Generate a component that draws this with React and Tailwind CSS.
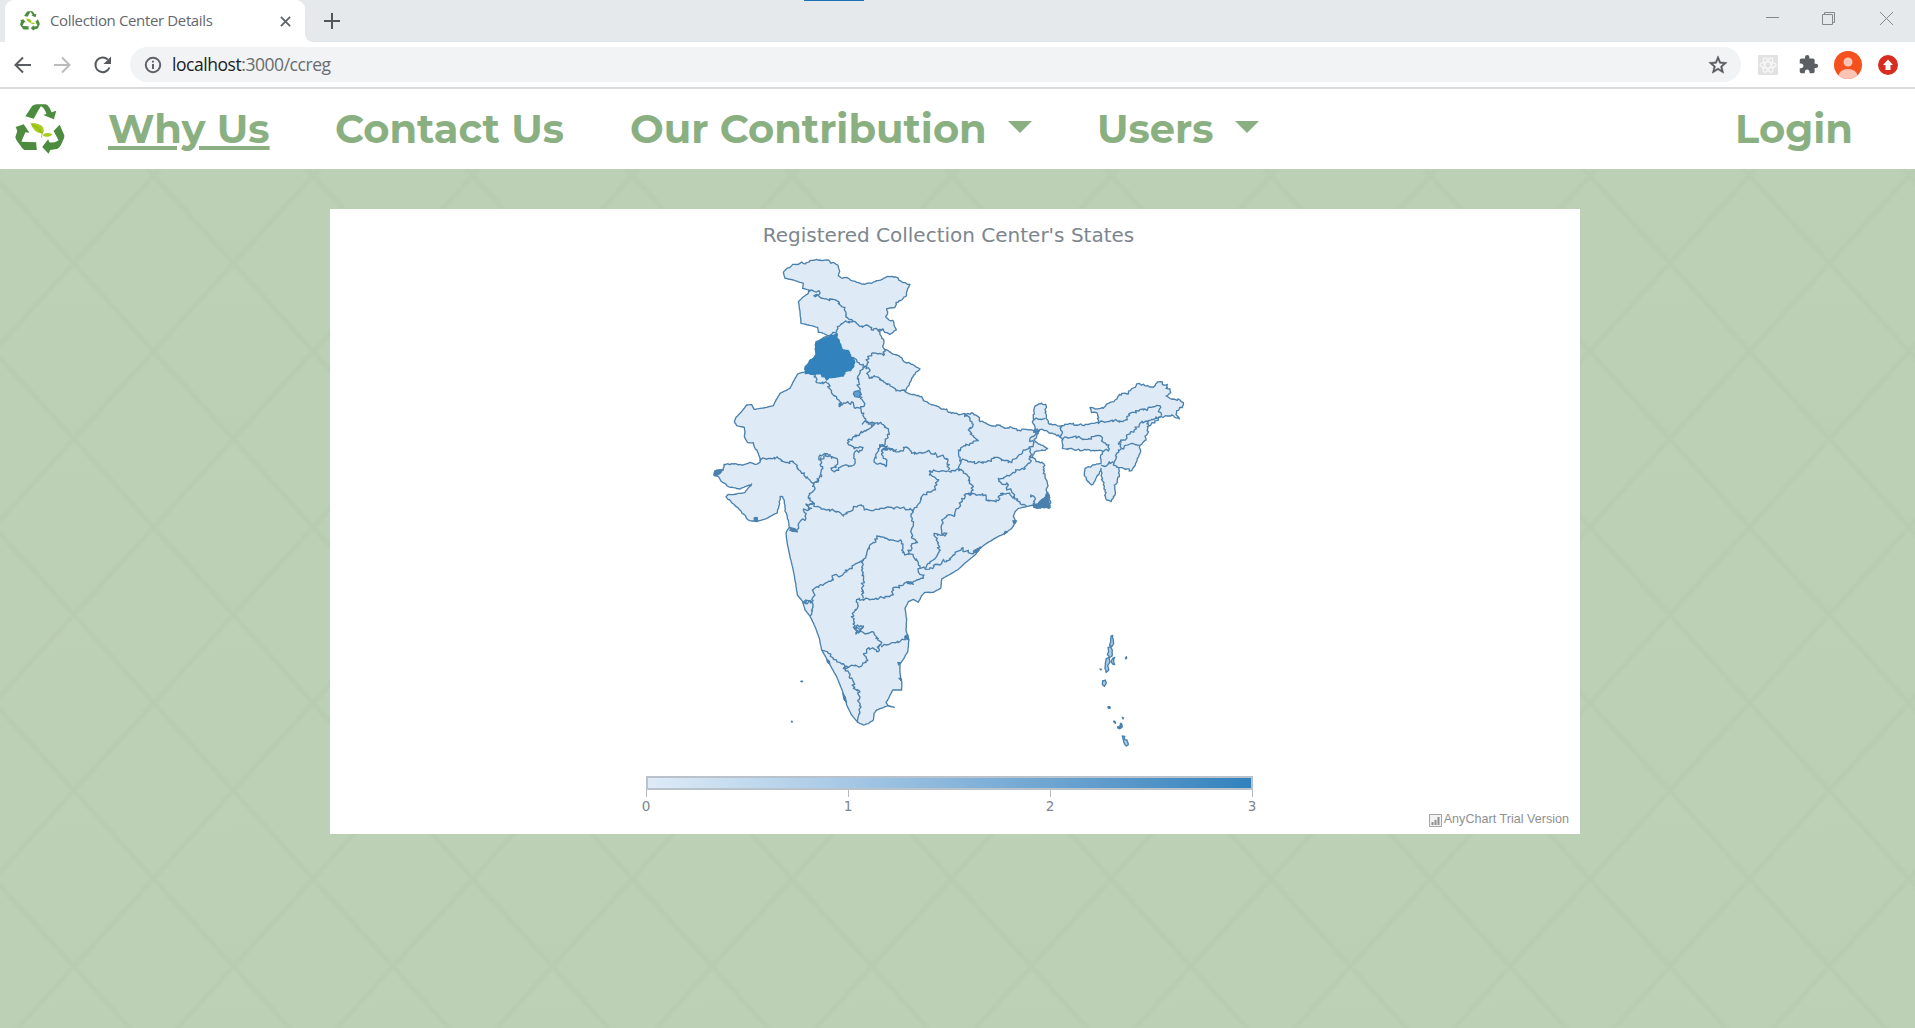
import React from "react";

// Map geometry is stored in a 3x grid; each region has its own local origin.
const ORIGINS = { A: [0, 0], B: [0, 570], C: [690, 390], D: [210, 870], E: [1080, 1140] };

function parse(key, text) {
  const [ox, oy] = ORIGINS[key];
  return text.trim().split(/\s+/).map((pair) => {
    const [x, y] = pair.split(",").map(Number);
    return [x + ox, y + oy];
  });
}

// Adds small deterministic wiggles so that surveyed borders look ragged.
function roughen(points, amp) {
  let seed = 7;
  const rnd = () => {
    seed = (seed * 16807) % 2147483647;
    return seed / 2147483647 - 0.5;
  };
  const out = [points[0]];
  for (let i = 1; i < points.length; i++) {
    const [x0, y0] = points[i - 1];
    const [x1, y1] = points[i];
    const n = Math.max(1, Math.round(Math.hypot(x1 - x0, y1 - y0) / 5));
    for (let k = 1; k < n; k++) {
      out.push([x0 + ((x1 - x0) * k) / n + rnd() * amp, y0 + ((y1 - y0) * k) / n + rnd() * amp]);
    }
    out.push([x1, y1]);
  }
  return out;
}

const toPath = (points) => "M" + points.map(([x, y]) => x.toFixed(1) + " " + y.toFixed(1)).join("L");

const OUTLINE = [
  ["A", 4, "250,97 258,88 272,80 278,73 295,73 305,66 315,72 330,62 350,58 365,62 385,60 393,70 402,68 415,80 419,95 415,107 427,115 440,112 455,122 470,127 490,132 515,130 530,122 550,115 570,110 590,112 600,122 615,128 630,133 622,150 620,165 605,180 588,187 585,202 560,206 563,220 557,230 567,240 580,243 582,255 589,270 570,283 555,278 550,268 535,270 540,278 545,295 552,303 548,318 555,330 565,332 575,340 590,345 605,353 612,365 630,370 645,378 660,387 645,403 635,415 628,430 615,455 625,460 640,463 665,470 670,482 690,492 710,498 725,508 740,507 745,517 765,520 780,524"],
  ["C", 6, "105,130 120,133 125,128 145,140 150,155 165,158 185,168 205,165 225,175 240,170 262,182 285,178 312,182 315,170 307,155 312,125 318,107 335,99 347,103 348,125 348,145 355,160 375,163 397,167 420,160 440,165 470,163 505,157 502,130 485,128 480,113 495,117 520,115 535,100 555,90 568,73 592,72 600,62 627,40 650,48 670,52 680,40 697,36 700,45 712,43 708,55 720,57 722,68 708,78 728,87 750,90 760,97 758,108 740,122 738,133 748,147 735,143 725,135 710,138 690,142 680,152 656,168 652,170 653,190 645,198 648,210 635,223 628,232 632,242 622,265 605,302 580,295 568,293 568,320 560,340 553,345 555,375 543,395 530,390 525,365 520,345 515,320 513,295 500,320 485,345 470,330 463,312 465,295 485,288 500,282 513,280 512,255 520,245 505,242 470,240 440,240 397,235 397,205 388,200 375,192 360,190 345,182 330,178 322,182 325,190 318,205 312,210 325,222 340,227 353,236 335,240 320,243 305,262 325,275 342,282 340,300 345,320 352,340 350,365 358,375 360,413 315,413 310,405"],
  ["C", 1, "290,410 265,415 255,425 250,440 258,455 245,475 225,490 200,502 170,520 150,535 135,555 110,575 85,598"],
  ["D", 1, "565,118 545,130 515,147 512,175 490,187 465,187 455,197 445,217 430,208 415,215 405,235 410,270 408,300 413,318 417,330 413,365 400,388 390,402 390,430 395,455 395,480 368,480 358,500 348,518 355,528 373,532 355,527 320,540 312,550 310,570 295,581 280,585 263,577 245,555 230,525 220,490 200,440 180,405 155,360 148,325 135,290 120,258 105,240 98,215 82,195 72,130 60,80 50,30 48,10"],
  ["B", 3, "258,310 268,290 262,262 255,240 253,215 248,200 240,200 238,225 230,250 200,265 170,275 145,270 120,240 95,218 78,200 85,193 110,192 135,187 155,162 135,170 120,177 85,170 62,152 55,140 42,135 45,122 70,120 72,103 100,102 130,105 150,97 165,103 180,97 182,88 175,70 165,55 160,38 142,37 133,20"],
  ["A", 1, "135,575 133,562 110,557 103,545 108,532 120,520 130,508 140,495 155,494 162,508 190,504 220,497 228,480 240,460 270,445 285,415 293,402 317,395 316,380 340,355 348,345 348,305 360,300 372,292 385,287 380,285 365,278 355,277 353,262 325,255 303,250 300,215 295,185 305,175 325,160 327,150 308,145 310,130 280,120 255,115 250,97"],
];

const BORDERS = [
  ["A", "327,150 345,155 357,152 358,163 342,167 380,177 410,182 425,200 437,215 438,232 458,243 475,255 487,262 500,255 515,262 520,270 530,265 537,275 550,268"],
  ["A", "385,285 395,283 410,275 412,260 430,248 458,243"],
  ["A", "452,350 470,360 478,372 490,377 500,378 503,350 515,340 535,342 553,343 555,330"],
  ["A", "500,378 510,390 500,400 508,415 525,410 535,412 550,425 570,437 590,452 615,455"],
  ["A", "498,378 480,392 473,410 475,440 480,455 480,470 490,485 490,500 482,505 485,520 495,535 500,548 525,550"],
  ["A", "347,402 350,428 385,430 388,445 395,460 410,475 420,485 418,498 435,490 460,488 465,505 480,505"],
  ["A", "418,488 428,494 418,500 425,486"],
  ["A", "488,550 500,544 510,552 525,550 545,552 565,568 563,590 555,610 540,620 530,640 522,665 530,672 545,672 558,680 560,665 550,655 545,640 550,625 560,628 580,630 600,632 620,622 635,640 660,637 685,632 710,645 740,655 743,665 745,690"],
  ["A", "540,612 552,620 562,618 555,630 568,626 580,634 590,628"],
  ["A", "540,622 548,614 556,624 546,630 562,624"],
  ["A", "525,553 500,570 460,590 443,602 447,615 465,625 485,622 485,632 465,635 462,650 465,665 455,678 430,677 420,682 410,690 403,695 393,685 408,683 410,655 395,655 385,645 375,642 360,645 362,660 368,680 365,705 357,715 350,728"],
  ["A", "362,652 372,656 376,642 384,650 390,642"],
  ["B", "180,88 205,85 235,85 255,97 280,95 290,110 305,130 325,147 340,160 355,155 350,145"],
  ["B", "343,160 343,180 328,190 325,200 330,212 343,220 318,222 325,237 335,235 310,240 318,265 300,275 290,300 268,300"],
  ["B", "343,220 350,230 380,240 415,245 430,257 450,245 460,232 490,228 493,240 520,242 540,235 570,232 600,235 630,235 640,245"],
  ["B", "640,245 655,222 665,200 680,188 700,180 715,152 705,142 688,135 690,122 715,125 745,123"],
  ["B", "640,245 633,260 640,280 632,305 635,320 652,337 635,345 625,372 640,380 655,397 660,415"],
  ["B", "625,372 608,368 605,335 580,330 555,325 530,318 528,335 508,348 500,375 490,388 470,400 450,415 425,437 402,435 400,450 375,460 350,470 337,480 345,495 335,515 310,520"],
  ["B", "490,388 485,420 490,450 485,475 490,505"],
  ["D", "98,215 115,212 127,218 125,250 120,258"],
  ["D", "280,207 320,207 345,200 365,195 368,177 400,165 415,155 430,163 412,160 440,150 460,145 462,135 445,125 450,115 480,113 510,105 520,88 530,95 550,75 575,55 595,68 620,65 630,50"],
  ["D", "280,207 260,208 262,235 247,250 250,280 258,312 270,305 278,290 262,285 258,300 285,312 305,305 325,325 332,345 320,352"],
  ["D", "255,290 270,300 280,288 264,310"],
  ["D", "335,347 350,345 365,338 390,335 412,320"],
  ["D", "330,345 325,365 310,355 290,358 282,375 292,392 275,408 250,407 235,412 215,402 190,388 175,370 155,360"],
  ["D", "235,412 220,415 235,425 240,445 250,455 250,475 267,482 265,510 270,520 268,550 263,577"],
  ["D", "470,113 480,95 500,80 508,62 503,40 497,22 492,10 510,15 525,18 528,10 515,10 515,-30 530,-43 555,-45 565,-65 575,-95 600,-108"],
  ["C", "105,132 120,145 128,170 115,180 130,200 145,212 120,220 85,240 90,270 85,295 75,303 55,303"],
  ["C", "90,270 105,270 140,280 175,272 200,262 235,278 260,265 280,240 300,235 303,262 298,280 270,300 230,318 205,325 207,335 235,345 230,355 250,370 252,380 270,400 290,410"],
  ["C", "88,295 105,310 115,320 118,340 130,350 115,375"],
  ["C", "120,372 165,375 168,390 205,392 212,370 240,375 255,385"],
  ["C", "312,182 325,185 300,205 300,215 312,218 298,235"],
  ["C", "303,373 315,383 310,400 318,405"],
  ["C", "312,145 325,148 345,145"],
  ["C", "397,167 392,180 397,190 388,200"],
  ["C", "505,157 540,153 580,153 607,127 640,120 665,112 690,107 685,125 695,137"],
  ["C", "690,140 665,148 655,152 630,160 600,190 580,210 565,222 575,235 600,222 628,225"],
  ["C", "656,152 656,168"],
  ["C", "575,235 560,250 550,285 568,293"],
  ["C", "550,275 535,280 525,290 513,285"],
  ["C", "397,205 430,200 465,208 490,200 512,198 515,212 530,225 538,237 520,245"],
];

const SOLIDS = [
  ["B", "42,128 48,120 68,119 62,130 50,137 42,138"],
  ["B", "162,263 172,262 173,275 163,274"],
  ["B", "268,292 286,296 294,306 275,304"],
  ["C", "310,412 310,402 322,402 332,390 345,382 350,368 356,372 356,390 360,413"],
  ["C", "248,452 260,452 252,462"],
  ["C", "225,483 233,486 222,494"],
  ["C", "130,542 152,531 143,546 130,548"],
  ["C", "312,183 322,176 328,184 316,190"],
  ["D", "170,388 178,392 180,402 172,398"],
  ["D", "218,490 226,500 230,518 222,510"],
  ["D", "383,397 392,398 386,406"],
  ["D", "386,444 394,446 393,453"],
  ["D", "404,318 414,314 416,330 408,326"],
  ["D", "92,453 99,453 97,456 93,456"],
  ["D", "63,573 68,574 66,578"],
  ["E", "195,114 199,109 201,114 198,118"],
  ["E", "119,147 125,147 123,151"],
  ["E", "143,260 150,259 151,265 145,266"],
  ["E", "160,303 165,303 168,310 163,309"],
  ["E", "186,291 191,293 189,298"],
  ["E", "172,320 180,318 181,309 186,311 187,322 180,327 173,325"],
];

const ISLANDS = [
  "153,48 158,46 160,58 161,70 155,80 149,76 152,62",
  "144,82 152,80 157,92 156,108 148,112 142,104 146,94",
  "158,115 164,112 161,124 164,134 158,132 153,126",
  "139,115 147,112 150,124 143,138 146,150 138,157 135,146 136,130",
  "128,182 136,180 139,188 133,199 127,194",
  "187,348 194,349 193,356 201,360 205,374 199,378 192,368",
];

const outlinePath = toPath(OUTLINE.flatMap(([k, amp, t]) => roughen(parse(k, t), amp))) + "Z";
const PUNJAB = "385,291 398,287 411,280 410,292 418,305 425,328 445,332 452,350 462,360 462,378 452,392 435,395 430,408 405,412 388,412 380,420 376,412 366,410 365,403 345,402 316,401 316,380 340,355 348,345 348,308 372,296";

function IndiaMap() {
  return (
    <svg viewBox="0 0 1530 1530" className="absolute left-[370px] top-[31px] size-[510px]" fill="none" stroke="#4a80ad" strokeWidth="4" strokeLinejoin="round">
      <path d={outlinePath} fill="#deeaf6" />
      {BORDERS.map(([k, t], i) => (
        <path key={i} d={toPath(roughen(parse(k, t), 10))} />
      ))}
      <path d={toPath(roughen(parse("A", PUNJAB), 5)) + "Z"} fill="#3182bd" stroke="#3480b8" />
      <path d={toPath(parse("A", "463,455 475,452 482,460 478,472 465,470 460,462")) + "Z"} fill="#5f9fd0" />
      {SOLIDS.map(([k, t], i) => (
        <path key={i} d={toPath(parse(k, t)) + "Z"} fill="#4a80ad" strokeWidth="3" />
      ))}
      {ISLANDS.map((t, i) => (
        <path key={i} d={toPath(roughen(parse("E", t), 3)) + "Z"} fill="#a9cbe6" />
      ))}
    </svg>
  );
}

function RecycleLogo({ className }) {
  return (
    <svg viewBox="47 41 149 150" className={className} preserveAspectRatio="none">
      <g fill="#4d8b3f">
        <path d="M78 78L98 47Q104 42 112 42L138 42Q148 44 156 66L170 61L163 87L131 74L141 71Q133 50 124 48Q115 62 103 85Z" />
        <path d="M180 103L194 135Q195 142 190 150Q184 170 172 176L152 179L147 190L128 170L146 147L149 156Q163 158 172 153L177 150Q172 140 162 122Z" />
        <path d="M49 110L73 102L90 127L78 126Q72 140 66 154L110 156L112 179L75 179Q68 176 62 164Q50 150 48 140L54 122Z" />
      </g>
      <path d="M93 98Q122 98 131 112Q135 122 130 130Q102 128 93 98Z" fill="#a6cb1c" />
      <path d="M130 134Q138 123 159 132Q150 144 132 137Z" fill="#a6cb1c" />
      <path d="M98 102Q118 110 128 130L126 142" fill="none" stroke="#7fa80f" strokeWidth="2" />
    </svg>
  );
}

function TabStrip() {
  return (
    <div className="relative flex h-[42px] bg-[#e5e9ec]">
      <div className="absolute left-[804px] top-0 h-px w-[60px] bg-[#1f6fb5]" />
      <div className="ml-[5px] flex h-full w-[300px] items-center rounded-t-[9px] bg-white pl-[15px] pr-[14px]">
        <RecycleLogo className="-mt-px size-5" />
        <span className="ml-[10px] -mt-px whitespace-nowrap font-['Open_Sans',sans-serif] text-[15px] tracking-[-0.36px] text-[#64686c]">
          Collection Center Details
        </span>
        <svg viewBox="0 0 12 12" className="ml-auto size-[11px]" stroke="#5f6368" strokeWidth="2">
          <path d="M1 1l10 10M11 1L1 11" />
        </svg>
      </div>
      <svg viewBox="0 0 8 8" className="mt-auto size-2 fill-white"><path d="M0 0v8h8A8 8 0 0 1 0 0z" /></svg>
      <svg viewBox="0 0 16 16" className="ml-[11px] mt-[13px] size-4" stroke="#53575b" strokeWidth="2">
        <path d="M8 0v16M0 8h16" />
      </svg>
      <svg viewBox="0 0 130 16" className="ml-auto mr-[21px] mt-[11px] h-4 w-[130px]" fill="none" stroke="#84888c">
        <path d="M2 6.500h13M58.500 3.500h10v10h-10zM60.500 3v-1.500h10v10h-2M116 1l13 13M129 1l-13 13" />
      </svg>
    </div>
  );
}

function Toolbar() {
  return (
    <div className="flex h-[47px] items-center border-b-2 border-[#d9dbdc] bg-white pl-[14px] pr-[17px]">
      <svg viewBox="0 0 98 20" className="h-5 w-[98px]" fill="none" strokeWidth="2">
        <path d="M17 10H2M9 2.500L1.500 10L9 17.500" stroke="#5a5e62" />
        <path d="M40 10h15M48 2.500L55.500 10L48 17.500" stroke="#b9bbbd" />
        <path d="M95.500 12.500A7.300 7.300 0 1 1 93.800 4.600" stroke="#55595d" />
        <path d="M97 1.500v7.500h-7.500z" fill="#55595d" />
      </svg>
      <div className="ml-[18px] flex h-[35px] flex-1 items-center rounded-full bg-[#f1f3f4] pl-[14px] pr-[12px]">
        <svg viewBox="0 0 18 18" className="size-[18px]" fill="none" stroke="#5f6368" strokeWidth="2">
          <circle cx="9" cy="9" r="7.200" />
          <path d="M9 8v5M9 4.800v1.800" />
        </svg>
        <span className="ml-[10px] whitespace-nowrap font-['Open_Sans',sans-serif] text-[17.500px] leading-none tracking-[-0.45px] text-[#686c70]">
          <span className="text-[#202124]">localhost</span>:3000/ccreg
        </span>
        <svg viewBox="0 0 24 24" className="ml-auto size-[22px] fill-[#55595d] stroke-[#55595d] stroke-[0.5]">
          <path d="M22 9.240l-7.190-.62L12 2 9.190 8.630 2 9.240l5.460 4.730L5.820 21 12 17.270 18.180 21l-1.630-7.030L22 9.240zM12 15.400l-3.760 2.270 1-4.280-3.320-2.880 4.380-.38L12 6.100l1.710 4.040 4.380.38-3.320 2.880 1 4.280L12 15.400z" />
        </svg>
      </div>
      <svg viewBox="0 0 20 20" className="ml-[17px] size-5">
        <rect width="20" height="20" rx="1" fill="#e2e2e2" />
        <g fill="none" stroke="#f8f8f8" strokeWidth="1.200">
          <ellipse cx="10" cy="10" rx="8" ry="3" />
          <ellipse cx="10" cy="10" rx="8" ry="3" transform="rotate(60 10 10)" />
          <ellipse cx="10" cy="10" rx="8" ry="3" transform="rotate(120 10 10)" />
        </g>
      </svg>
      <svg viewBox="0 0 24 24" className="ml-[20px] size-[21px] fill-[#5b5f64]">
        <path d="M20.500 11H19V7c0-1.100-.9-2-2-2h-4V3.500a2.500 2.500 0 0 0-5 0V5H4c-1.100 0-1.990.9-1.990 2v3.800H3.500c1.490 0 2.700 1.210 2.700 2.700s-1.210 2.700-2.700 2.700H2V20c0 1.100.9 2 2 2h3.800v-1.500c0-1.490 1.210-2.700 2.700-2.700s2.700 1.210 2.700 2.700V22H17c1.100 0 2-.9 2-2v-4h1.500a2.500 2.500 0 0 0 0-5z" />
      </svg>
      <svg viewBox="0 0 28 28" className="ml-[15px] size-7">
        <clipPath id="avatar"><circle cx="14" cy="14" r="14" /></clipPath>
        <g clipPath="url(#avatar)">
          <rect width="28" height="28" fill="#f4511e" />
          <circle cx="14" cy="11" r="4.500" fill="#fbc4b4" />
          <ellipse cx="14" cy="25" rx="9.500" ry="7" fill="#fbc4b4" />
        </g>
      </svg>
      <svg viewBox="0 0 20 20" className="ml-[16px] size-5">
        <circle cx="10" cy="10" r="10" fill="#d62d20" />
        <path d="M10 4.500l5 5.500h-2.500v5h-5v-5H5z" fill="#fff" />
      </svg>
    </div>
  );
}

function Caret() {
  return (
    <svg viewBox="0 0 24 12" className="-mt-1 h-3 w-6"><path d="M0 0h24L12 12z" fill="#8ab082" /></svg>
  );
}

function NavLink({ className, children }) {
  return <a className={"-mt-px whitespace-nowrap " + className}>{children}</a>;
}

function Navbar() {
  return (
    <nav className="flex h-20 items-center bg-white pl-4 font-[Montserrat,Inter,sans-serif] text-[40px] font-bold leading-none text-[#8ab082]">
      <RecycleLogo className="-ml-px size-[50px]" />
      <NavLink className="ml-[43px] w-[227px] underline decoration-[4px] underline-offset-[3px]">Why Us</NavLink>
      <NavLink className="w-[295px]">Contact Us</NavLink>
      <NavLink className="w-[378px]">Our Contribution</NavLink>
      <Caret />
      <NavLink className="ml-[65px] w-[138px]">Users</NavLink>
      <Caret />
      <NavLink className="ml-auto w-[180px]">Login</NavLink>
    </nav>
  );
}

function DiamondBackground() {
  return (
    <svg className="absolute inset-0 h-full w-full">
      <defs>
        <linearGradient id="cell" x1="0.45" y1="0" x2="0.55" y2="1">
          <stop offset="0" stopColor="#bdd1b6" />
          <stop offset="1" stopColor="#bacfb3" />
        </linearGradient>
        <pattern id="diamonds" width="159.6" height="175.8" x="-6" y="94.500" patternUnits="userSpaceOnUse">
          <rect width="160" height="176" fill="#bcd0b5" />
          <path d="M79.800 0L159.600 87.900L79.800 175.800L0 87.900z" fill="url(#cell)" />
          <path d="M79.800 0L159.600 87.900L79.800 175.800L0 87.900z" fill="none" stroke="#b4c8ad" strokeWidth="7" opacity="0.25" />
          <path d="M79.800 0L159.600 87.900L79.800 175.800L0 87.900z" fill="none" stroke="#b4c8ad" strokeWidth="3" opacity="0.25" />
        </pattern>
      </defs>
      <rect width="100%" height="100%" fill="url(#diamonds)" />
    </svg>
  );
}

function Legend() {
  return (
    <div className="absolute left-[316px] top-[567px] w-[607px]">
      <div className="h-[14px] border-2 border-[#b9c2ca] bg-linear-to-r from-[#deebf7] via-[#89b6db] via-50% to-[#3182bd]" />
      <div className="flex justify-between">
        {[0, 1, 2, 3].map((n) => (
          <div key={n} className="flex w-px flex-col items-center">
            <div className="h-[7px] w-px bg-[#b5bbc0]" />
            <span className="mr-[1px] mt-[2px] font-['DejaVu_Sans',sans-serif] text-[13.500px] leading-[14px] text-[#7c868e]">{n}</span>
          </div>
        ))}
      </div>
    </div>
  );
}

export default function App() {
  return (
    <div className="flex h-[1028px] w-[1915px] flex-col overflow-hidden">
      <TabStrip />
      <Toolbar />
      <Navbar />
      <main className="relative flex-1 bg-[#bcd0b5] pl-[330px] pt-10">
        <DiamondBackground />
        <section className="relative h-[625px] w-[1250px] bg-white">
          <h1 className="pt-[13px] pr-[13px] text-center font-['DejaVu_Sans',sans-serif] text-[20px] leading-[26px] text-[#7c868e]">
            Registered Collection Center's States
          </h1>
          <IndiaMap />
          <Legend />
          <div className="absolute bottom-[7px] right-[11px] flex items-center gap-[2px] font-['Liberation_Sans',sans-serif] text-[12.600px] leading-[14px] text-[#909090]">
            <svg viewBox="0 0 13 13" className="size-[13px]">
              <path d="M.5.5h12v12H.5z" fill="#f2f2f2" stroke="#a5a5a5" />
              <path d="M2.500 8h2v3h-2zM5.500 6h2v5h-2zM8.500 3h2v8h-2z" fill="#8e8e8e" />
            </svg>
            <span className="-mt-[3px]">AnyChart Trial Version</span>
          </div>
        </section>
      </main>
    </div>
  );
}
